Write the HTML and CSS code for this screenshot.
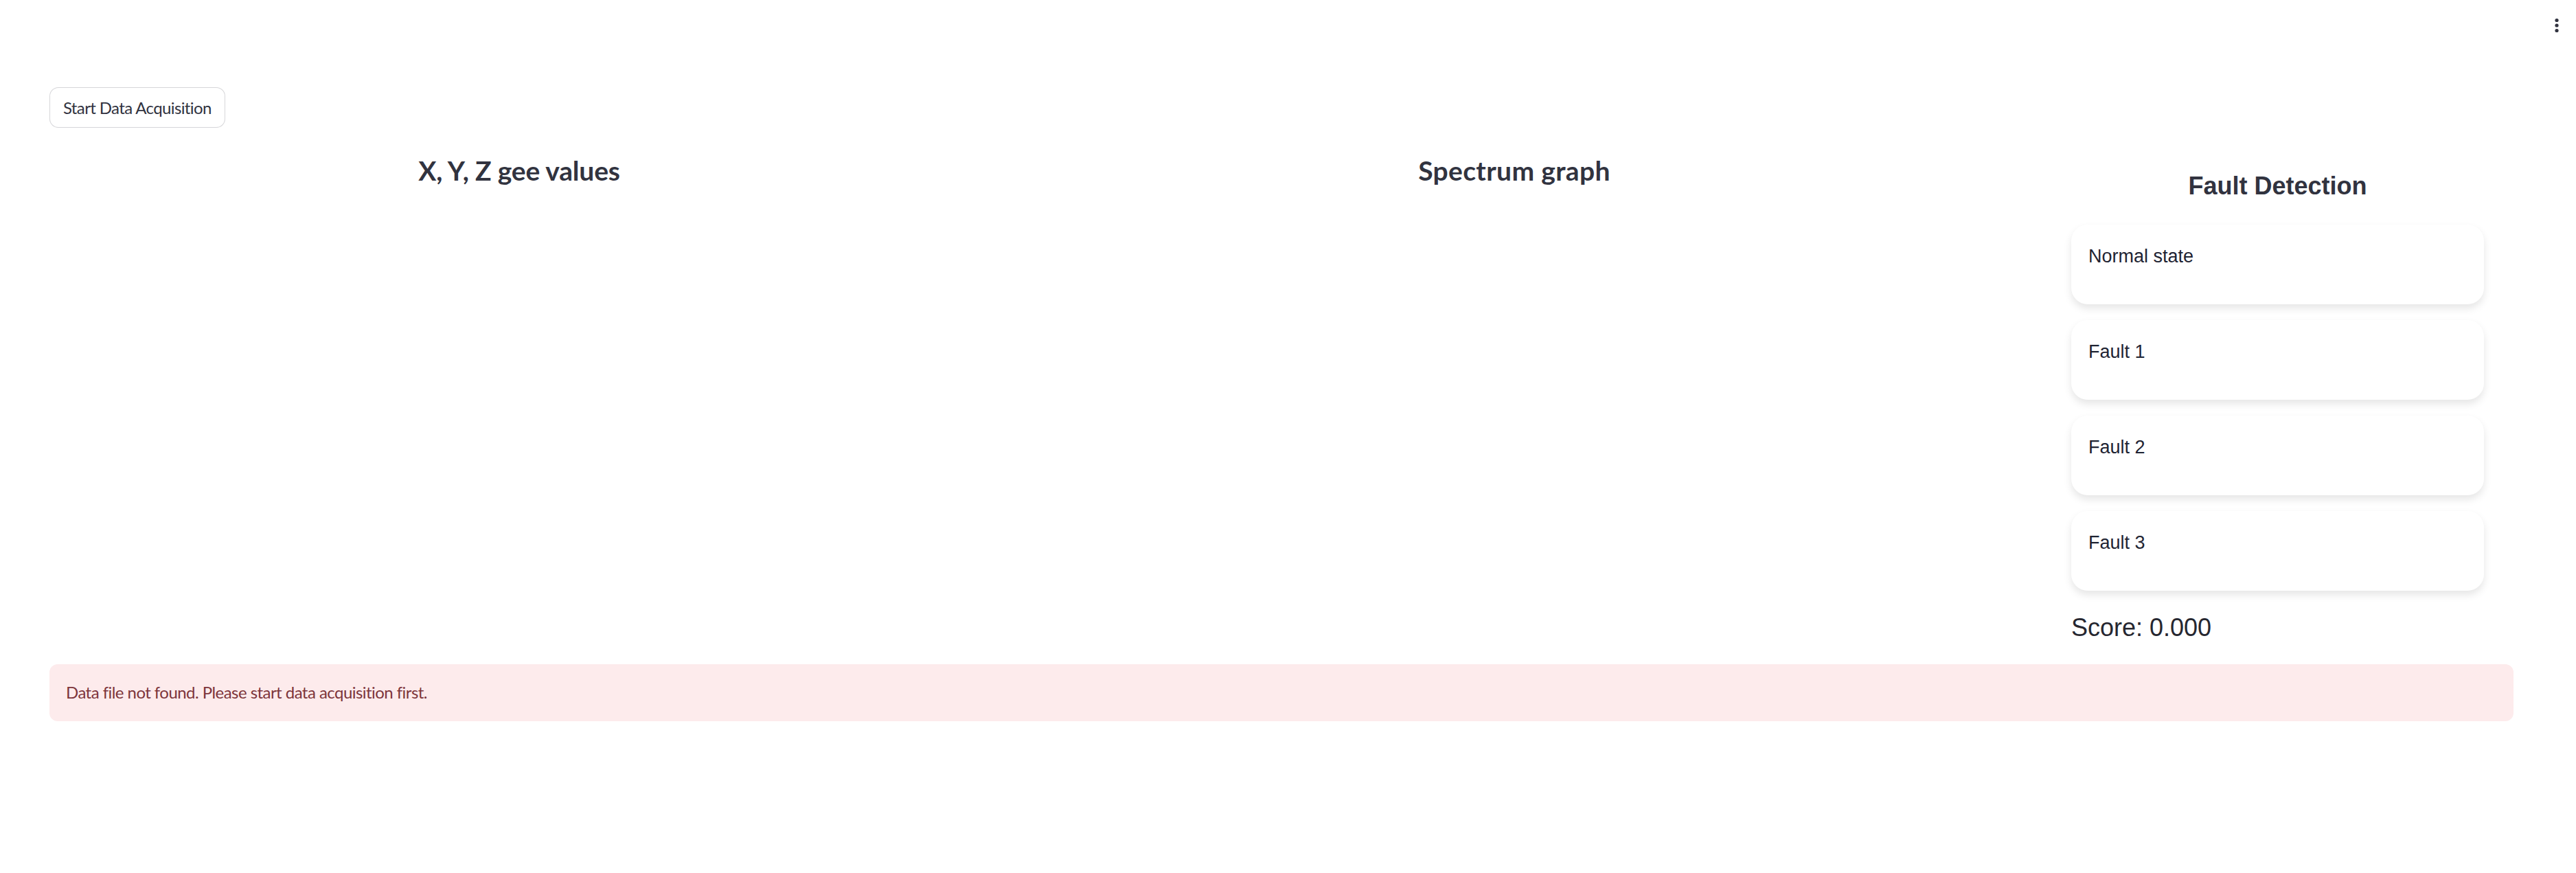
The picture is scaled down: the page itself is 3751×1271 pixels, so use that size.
FILE: index.html
```html
<!DOCTYPE html>
<html lang="en">
<head>
<meta charset="utf-8">
<title>Fault Detection</title>
<link rel="stylesheet" href="styles.css">
</head>
<body>
<header class="toolbar">
  <button class="menu-btn" aria-label="Main menu">
    <svg class="menu-icon" viewBox="0 0 8 24" width="8" height="24">
      <circle cx="4" cy="4.5" r="2.6"/>
      <circle cx="4" cy="12" r="2.6"/>
      <circle cx="4" cy="19.5" r="2.6"/>
    </svg>
  </button>
</header>
<main class="main">
  <div class="block">
    <div class="btn-row">
      <button class="btn">Start Data Acquisition</button>
    </div>
    <div class="columns">
      <div class="col">
        <h3 class="col-title">X, Y, Z gee values</h3>
      </div>
      <div class="col">
        <h3 class="col-title col-title-wide">Spectrum graph</h3>
      </div>
      <div class="col col-fault">
        <h2 class="fault-title">Fault Detection</h2>
        <div class="cards">
          <div class="card">Normal state</div>
          <div class="card">Fault 1</div>
          <div class="card">Fault 2</div>
          <div class="card">Fault 3</div>
        </div>
        <div class="score">Score: 0.000</div>
      </div>
    </div>
    <div class="alert">Data file not found. Please start data acquisition first.</div>
  </div>
</main>
</body>
</html>
```
FILE: styles.css
```css
* { box-sizing: border-box; }
html, body { margin: 0; padding: 0; background: #ffffff; }
body {
  font-family: "Lato", "Noto Sans", sans-serif;
  color: #31333f;
  width: 3751px;
  min-height: 1271px;
  position: relative;
}
.toolbar {
  position: absolute;
  top: 0;
  right: 0;
  height: 72px;
  padding: 0 20px 0 0;
}
.menu-btn {
  border: none;
  background: transparent;
  padding: 0;
  margin: 0;
  position: absolute;
  top: 25px;
  right: 24px;
  width: 8px;
  height: 24px;
}
.menu-icon { display: block; fill: #31333f; }
.main { padding: 127px 91px 0 72px; }
.block { display: flex; flex-direction: column; }
.btn-row { display: flex; }
.btn {
  font-family: "Lato", "Noto Sans", sans-serif;
  font-size: 24px;
  line-height: 38px;
  height: 59px;
  padding: 0 19px;
  color: #31333f;
  background: #ffffff;
  border: 1.5px solid rgba(49, 51, 63, 0.2);
  border-radius: 13px;
  letter-spacing: -0.62px;
}
.columns {
  display: grid;
  grid-template-columns: 1368fr 1434fr 690fr;
  column-gap: 48px;
  margin-top: 24px;
}
.col { min-width: 0; }
.col-title {
  margin: 0;
  padding-top: 14px;
  font-size: 39px;
  line-height: 48px;
  font-weight: 700;
  text-align: center;
  color: #31333f;
  letter-spacing: -0.2px;
}
.col-title-wide { letter-spacing: 0.35px; }
.col-fault { padding: 0 43px 0 46px; }
.fault-title {
  margin: 40px 0 0 0;
  font-family: "Liberation Sans", Arial, sans-serif;
  font-size: 36px;
  line-height: 41px;
  font-weight: 700;
  text-align: center;
  color: #31333f;
}
.cards {
  display: flex;
  flex-direction: column;
  gap: 23px;
  margin-top: 36px;
}
.card {
  height: 116px;
  padding: 31px 25px 0 25px;
  border-radius: 24px;
  background: #ffffff;
  box-shadow: 0 6px 12px rgba(0, 0, 0, 0.1);
  font-family: "Liberation Sans", Arial, sans-serif;
  font-size: 27px;
  line-height: 31px;
  color: #1f2433;
}
.score {
  margin-top: 33px;
  font-family: "Liberation Sans", Arial, sans-serif;
  font-size: 36px;
  line-height: 41px;
  color: #262730;
}
.alert {
  margin-top: 33px;
  padding: 22px 24px 23px 24px;
  background: #fdebec;
  border-radius: 12px;
  color: #7d353b;
  font-size: 24px;
  line-height: 38px;
  letter-spacing: -0.55px;
}
```
